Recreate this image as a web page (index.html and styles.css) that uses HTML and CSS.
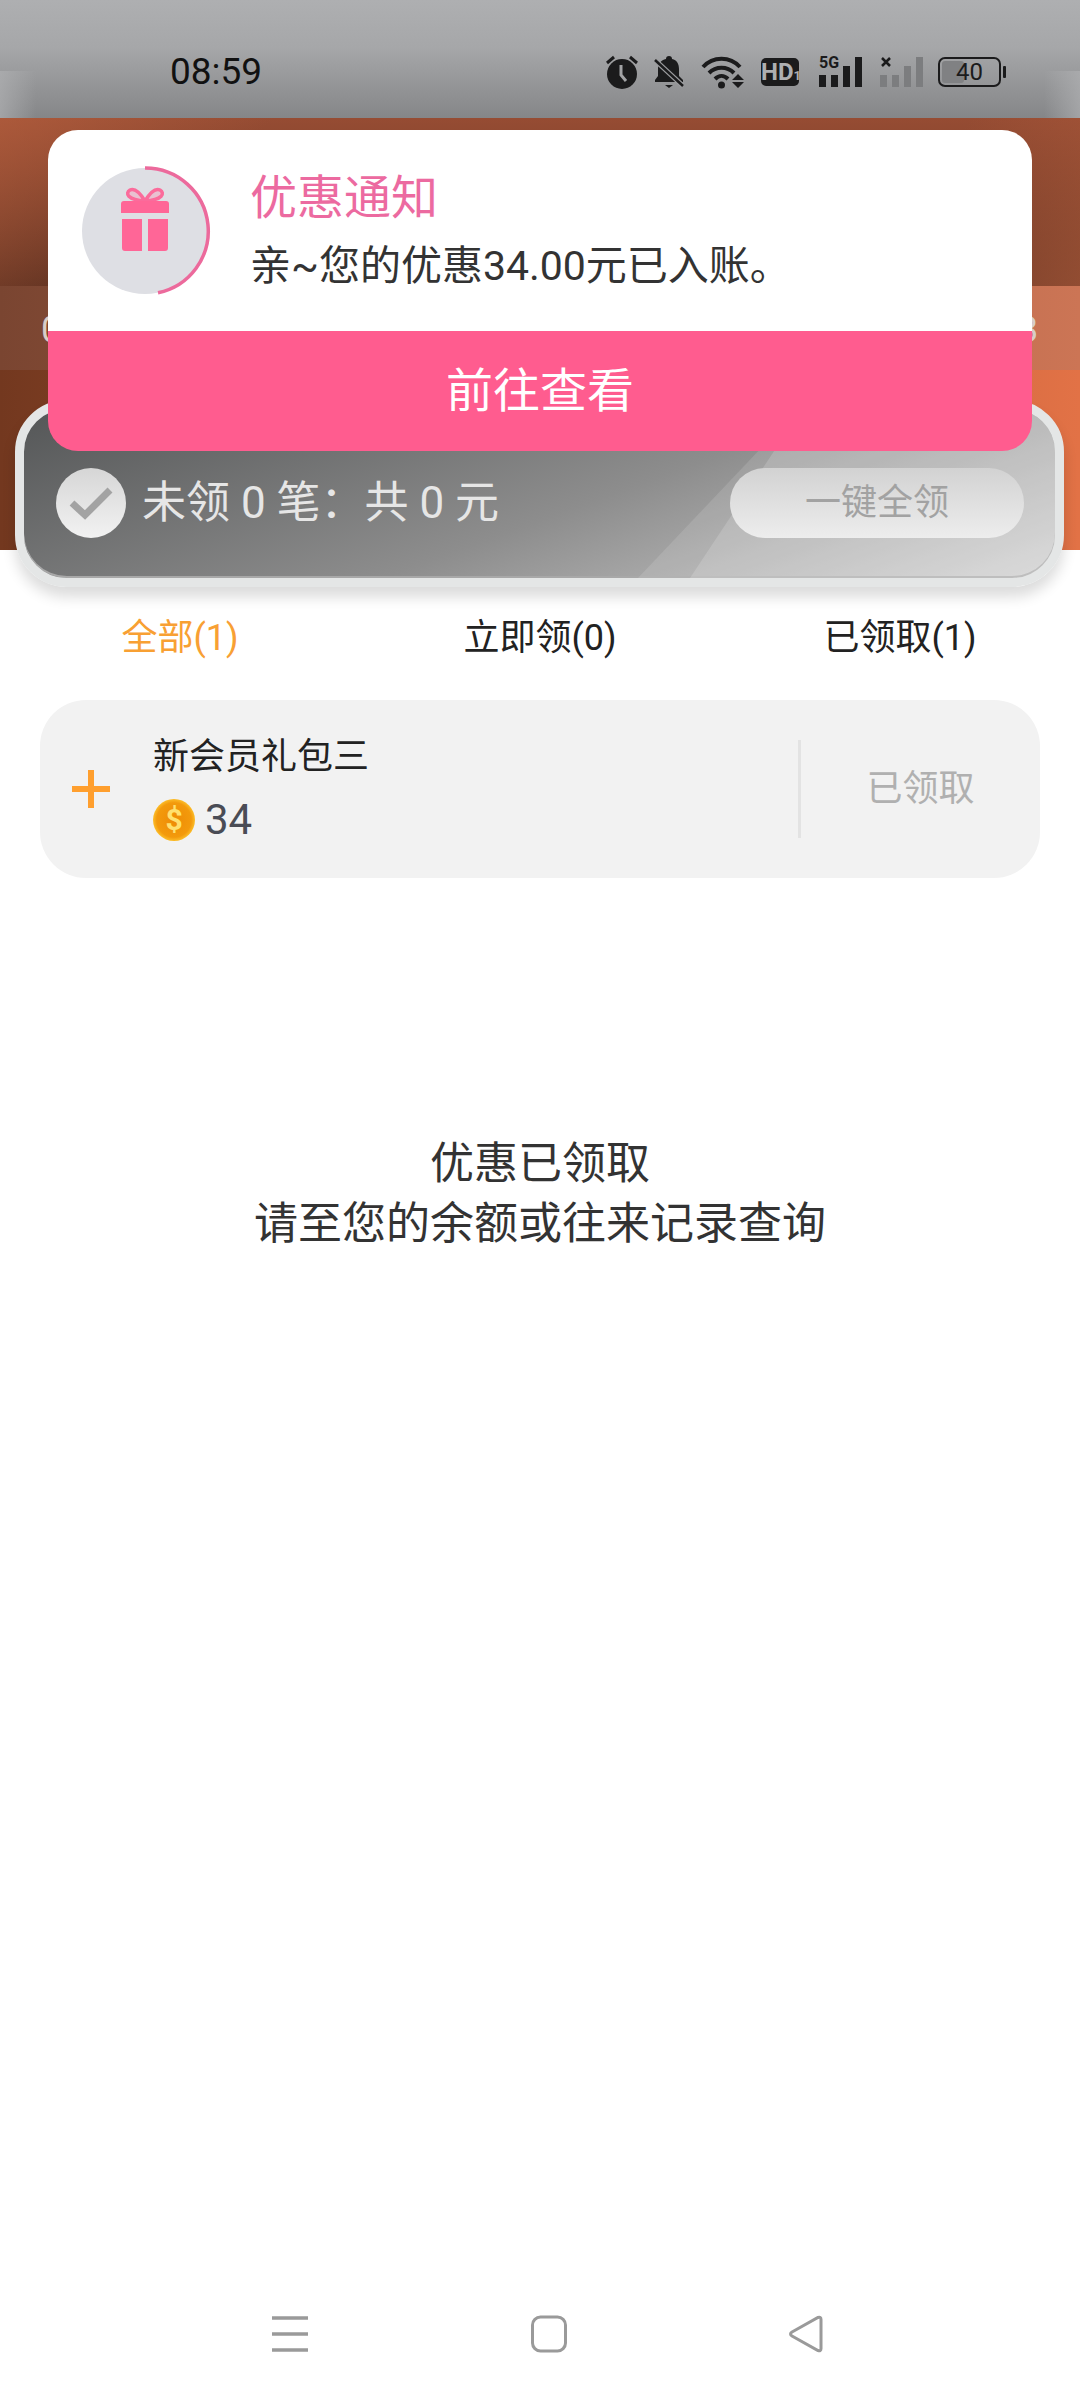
FILE: index.html
```html
<!DOCTYPE html>
<html>
    <head>
        <title>优惠通知</title>
        <link rel="stylesheet" href="styles.css">
    </head>
    <body>
        <div id="page">
            <div class="status-bar">
                <span class="time">08:59</span>
                <div class="status-icons">
                    <svg class="ic-alarm" viewBox="0 0 32 34" width="32" height="34">
                        <path d="M1 8 8 2M31 8 24 2" stroke="#1b1b1c" stroke-width="3" fill="none"/>
                        <circle cx="16" cy="19" r="15" fill="#1b1b1c"/>
                        <path d="M15 10v10l5 6" stroke="#a2a3a5" stroke-width="3" fill="none"/>
                    </svg>
                    <svg class="ic-bell" viewBox="0 0 30 34" width="30" height="34">
                        <path d="M15 1a3 3 0 0 1 3 3c5 1 7 5 7 10v7l4 4v2H1v-2l3-4v-7c0-5 3-9 8-10a3 3 0 0 1 3-3z" fill="#1b1b1c"/>
                        <path d="M11 30h8l-4 3z" fill="#1b1b1c"/>
                        <path d="M1 5 29 31" stroke="#9d9ea0" stroke-width="5"/>
                        <path d="M1 5 29 31" stroke="#1b1b1c" stroke-width="2.5"/>
                    </svg>
                    <svg class="ic-wifi" viewBox="0 0 44 34" width="44" height="34">
                        <path d="M2 12C12 1 29 1 39 12" stroke="#1b1b1c" stroke-width="4" fill="none"/>
                        <path d="M8 18c7-7 18-7 25 0" stroke="#1b1b1c" stroke-width="4" fill="none"/>
                        <path d="M14 24c4-4 9-4 13 0" stroke="#1b1b1c" stroke-width="4" fill="none"/>
                        <circle cx="20.500" cy="30" r="3.500" fill="#1b1b1c"/>
                        <path d="M37 19l6 6H31zM31 27h12l-6 6z" fill="#1b1b1c"/>
                    </svg>
                    <div class="ic-hd">HD<small>1</small></div>
                    <div class="signal">
                        <span class="five-g">5G</span>
                        <i class="s1"></i><i class="s2"></i><i class="s3"></i><i class="s4"></i>
                    </div>
                    <div class="signal off">
                        <svg class="ic-x" viewBox="0 0 10 10" width="10" height="10">
                            <path d="M1 1 9 9M9 1 1 9" stroke="#1b1b1c" stroke-width="2.500"/>
                        </svg>
                        <i class="s1"></i><i class="s2"></i><i class="s3"></i><i class="s4"></i>
                    </div>
                    <div class="battery">
                        <div class="battery-fill"></div>
                        <span>40</span>
                    </div>
                </div>
            </div>

            <div class="hero">
                <div class="hero-top"></div>
                <div class="hero-band"><span>0</span><span>8</span></div>
                <div class="hero-low">
                    <div class="balance-card">
                        <div class="check-dot">
                            <svg viewBox="0 0 44 34" width="44" height="34">
                                <path d="M3 17 16 29 41 4" stroke="#a3a3a3" stroke-width="7" fill="none"/>
                            </svg>
                        </div>
                        <div class="balance-text">未领 0 笔：共 0 元</div>
                        <div class="claim-all">一键全领</div>
                    </div>
                </div>
            </div>

            <div class="sheet">
                <div class="tabs">
                    <div class="tab active">全部(1)</div>
                    <div class="tab">立即领(0)</div>
                    <div class="tab">已领取(1)</div>
                </div>

                <div class="item">
                    <svg class="plus" viewBox="0 0 38 38" width="38" height="38">
                        <path d="M19 0v38M0 19h38" stroke="#ff9f2e" stroke-width="6"/>
                    </svg>
                    <div class="item-info">
                        <div class="item-name">新会员礼包三</div>
                        <div class="item-amount"><span class="coin">$</span>34</div>
                    </div>
                    <div class="item-state">已领取</div>
                </div>

                <div class="empty-note">优惠已领取<br>请至您的余额或往来记录查询</div>

                <div class="nav-bar">
                    <svg viewBox="0 0 36 38" width="36" height="38">
                        <path d="M0 3h36M0 19h36M0 35h36" stroke="#9a9a9a" stroke-width="3.500"/>
                    </svg>
                    <svg viewBox="0 0 36 38" width="36" height="38">
                        <rect x="1.500" y="2" width="33" height="34" rx="8" stroke="#9a9a9a" stroke-width="3" fill="none"/>
                    </svg>
                    <svg viewBox="0 0 34 38" width="34" height="38">
                        <path d="M3 17 29 2.500q3-1 3 2v29q0 3-3 2L3 21q-3-2 0-4z" stroke="#9a9a9a" stroke-width="3" fill="none"/>
                    </svg>
                </div>
            </div>

            <div class="toast">
                <div class="toast-body">
                    <div class="toast-icon">
                        <svg viewBox="0 0 130 130" width="130" height="130">
                            <circle cx="63" cy="65" r="63" fill="#dedfe4"/>
                            <path d="M63 2A63 63 0 0 1 76 126.700" stroke="#ec6a9c" stroke-width="3.500" fill="none"/>
                            <path d="M63 35c-6-10-11-13-15-11-5 3-3 10 15 11zM63 35c6-10 11-13 15-11 5 3 3 10-15 11z" stroke="#fb6b9b" stroke-width="3.500" fill="#e9c0d0"/>
                            <path d="M42 35h42a3 3 0 0 1 3 3v9H39v-9a3 3 0 0 1 3-3z" fill="#ff6697"/>
                            <path d="M40 53h20v32H43a3 3 0 0 1-3-3zM66 53h20v29a3 3 0 0 1-3 3H66z" fill="#ff6697"/>
                        </svg>
                    </div>
                    <div class="toast-text">
                        <div class="toast-title">优惠通知</div>
                        <div class="toast-msg">亲~您的优惠34.00元已入账。</div>
                    </div>
                </div>
                <div class="toast-btn">前往查看</div>
            </div>
        </div>
    </body>
</html>
```

FILE: styles.css
```css
body {
    font-family: Roboto, "Noto Sans CJK SC", sans-serif;
    margin: 0;
    padding: 0;
}

#page {
    display: flex;
    flex-direction: column;
    height: 2400px;
    overflow: hidden;
    position: relative;
    width: 1080px;
}

/* status bar */

.status-bar {
    align-items: center;
    background:
        linear-gradient(90deg, rgba(175, 176, 178, 0.7), rgba(175, 176, 178, 0) 36px, rgba(175, 176, 178, 0) 1044px, rgba(175, 176, 178, 0.7)) bottom / 100% 40% no-repeat,
        linear-gradient(180deg, #aeafb1 0%, #a6a7a9 40%, #858688 100%);
    box-sizing: border-box;
    display: flex;
    flex-shrink: 0;
    height: 118px;
    padding: 26px 0 0 170px;
}

.time {
    color: #111;
    font-size: 37px;
    line-height: 44px;
    width: 436px;
}

.status-icons {
    align-items: center;
    display: flex;
}

.ic-alarm {
    margin-right: 16px;
}

.ic-bell {
    margin-right: 17px;
}

.ic-wifi {
    margin-right: 16px;
}

.ic-hd {
    background-color: #1b1b1c;
    border-radius: 5px;
    color: #aeafb1;
    font-size: 24px;
    font-weight: 700;
    height: 28px;
    line-height: 28px;
    margin-right: 20px;
    text-align: center;
    width: 38px;
}

.ic-hd small {
    font-size: 13px;
}

.signal {
    align-items: flex-end;
    display: flex;
    gap: 5px;
    height: 30px;
    margin-right: 15px;
    position: relative;
    width: 46px;
}

.signal i {
    background-color: #1b1b1c;
    display: block;
    width: 7px;
}

.signal.off {
    margin-right: 15px;
    width: 43px;
}

.signal.off i {
    background-color: #7c7d7f;
}

.signal .s1 {
    height: 12px;
}

.signal .s2 {
    height: 12px;
}

.signal .s3 {
    height: 21px;
}

.signal .s4 {
    height: 30px;
}

.five-g {
    color: #1b1b1c;
    font-size: 16px;
    font-weight: 700;
    left: 0;
    line-height: 16px;
    position: absolute;
    top: -2px;
}

.ic-x {
    left: 1px;
    position: absolute;
    top: 0;
}

.battery {
    align-items: center;
    border: 2px solid #1b1b1c;
    border-radius: 7px;
    box-sizing: border-box;
    color: #1b1b1c;
    display: flex;
    font-size: 24px;
    height: 30px;
    justify-content: center;
    position: relative;
    width: 63px;
}

.battery::after {
    background-color: #1b1b1c;
    border-radius: 1px;
    content: "";
    height: 12px;
    position: absolute;
    right: -7px;
    top: 7px;
    width: 3px;
}

.battery-fill {
    background-color: #808183;
    border-radius: 3px;
    bottom: 2px;
    left: 2px;
    position: absolute;
    top: 2px;
    width: 22px;
}

.battery span {
    position: relative;
}

/* coloured header */

.hero {
    flex-shrink: 0;
}

.hero-top {
    background:
        linear-gradient(135deg, rgba(190, 100, 65, 0.55), rgba(190, 100, 65, 0) 22%, rgba(190, 100, 65, 0) 78%, rgba(190, 100, 65, 0.55)),
        linear-gradient(180deg, #964c33 0%, #5c3020 100%);
    height: 168px;
}

.hero-band {
    background: linear-gradient(90deg, #7a4531 0%, #cc7555 100%);
    box-sizing: border-box;
    color: #d9cdc7;
    display: flex;
    font-size: 36px;
    height: 84px;
    justify-content: space-between;
    line-height: 88px;
    padding: 0 42px 0 41px;
}

.hero-low {
    background: linear-gradient(90deg, #73381f 0%, #e27246 100%);
    box-sizing: border-box;
    height: 180px;
    padding: 30px 16px 0 15px;
}

.balance-card {
    align-items: center;
    background: linear-gradient(160deg, #545657 0%, #8d8d8d 55%, #cfcfcf 100%);
    border: 9px solid #e4e6e6;
    border-radius: 52px;
    box-shadow: 0 10px 14px rgba(0, 0, 0, 0.14), inset 0 -2px 0 #a8a8a8;
    box-sizing: border-box;
    display: flex;
    height: 187px;
    overflow: hidden;
    padding: 19px 31px 0 32px;
    position: relative;
    z-index: 1;
}

.balance-card::before {
    background-color: rgba(255, 255, 255, 0.12);
    bottom: 0;
    clip-path: polygon(0 100%, 160px 0, 100% 0, 100% 100%);
    content: "";
    left: 614px;
    position: absolute;
    right: 0;
    top: 0;
}

.balance-card::after {
    background-color: rgba(255, 255, 255, 0.16);
    bottom: 0;
    clip-path: polygon(0 100%, 112px 0, 100% 0, 100% 100%);
    content: "";
    left: 666px;
    position: absolute;
    right: 0;
    top: 0;
}

.check-dot {
    align-items: center;
    background: linear-gradient(180deg, #d6d6d6, #f2f2f2);
    border-radius: 50%;
    display: flex;
    flex-shrink: 0;
    height: 70px;
    justify-content: center;
    width: 70px;
}

.balance-text {
    color: #e6e6e6;
    flex: 1;
    font-size: 44px;
    line-height: 60px;
    margin-left: 16px;
}

.claim-all {
    background: linear-gradient(180deg, #d2d2d2, #ededed);
    border-radius: 35px;
    color: #a2a2a2;
    flex-shrink: 0;
    font-size: 36px;
    height: 70px;
    line-height: 70px;
    position: relative;
    text-align: center;
    width: 294px;
    z-index: 1;
}

/* white sheet */

.sheet {
    background-color: #fff;
    border-radius: 44px 44px 0 0;
    display: flex;
    flex: 1;
    flex-direction: column;
    margin-top: 0;
    padding-top: 58px;
}

.tabs {
    display: grid;
    grid-template-columns: repeat(3, 1fr);
}

.tab {
    color: #222;
    font-size: 36px;
    line-height: 60px;
    text-align: center;
}

.tab.active {
    color: #f8a033;
}

.item {
    align-items: center;
    background-color: #f2f2f2;
    border-radius: 46px;
    box-sizing: border-box;
    display: flex;
    height: 178px;
    margin: 32px 40px 0;
    padding: 0 0 0 32px;
}

.plus {
    flex-shrink: 0;
    margin-right: 43px;
}

.item-info {
    flex: 1;
}

.item-name {
    color: #222;
    font-size: 36px;
    line-height: 50px;
}

.item-amount {
    align-items: center;
    color: #4a4c55;
    display: flex;
    font-size: 42px;
    line-height: 52px;
    margin-top: 12px;
}

.coin {
    background: radial-gradient(circle, #ee8b05 0%, #f39a0c 58%, #ffc933 75%, #f9a91a 100%);
    border-radius: 50%;
    color: #ffe06f;
    display: block;
    font-size: 30px;
    font-weight: 700;
    height: 42px;
    line-height: 42px;
    margin-right: 10px;
    text-align: center;
    width: 42px;
}

.item-state {
    border-left: 3px solid #e3e3e3;
    box-sizing: border-box;
    color: #b0b0b0;
    flex-shrink: 0;
    font-size: 36px;
    height: 98px;
    line-height: 98px;
    margin-top: 0;
    text-align: center;
    width: 242px;
}

.empty-note {
    color: #333;
    font-size: 44px;
    line-height: 60px;
    margin-top: 256px;
    text-align: center;
}

.nav-bar {
    display: flex;
    justify-content: space-between;
    margin-top: auto;
    padding: 0 257px 47px 272px;
}

/* notification over the page */

.toast {
    border-radius: 30px;
    left: 48px;
    overflow: hidden;
    position: absolute;
    top: 130px;
    width: 984px;
    z-index: 2;
}

.toast-body {
    align-items: center;
    background-color: #fff;
    display: flex;
    height: 201px;
    padding-left: 34px;
}

.toast-icon {
    display: flex;
    flex-shrink: 0;
    margin-right: 38px;
}

.toast-title {
    color: #ec6aa0;
    font-size: 47px;
    line-height: 60px;
}

.toast-msg {
    color: #333;
    font-size: 41px;
    line-height: 56px;
    margin-top: 10px;
}

.toast-btn {
    background-color: #ff5c8f;
    color: #fff;
    font-size: 47px;
    height: 120px;
    line-height: 120px;
    text-align: center;
}
```
